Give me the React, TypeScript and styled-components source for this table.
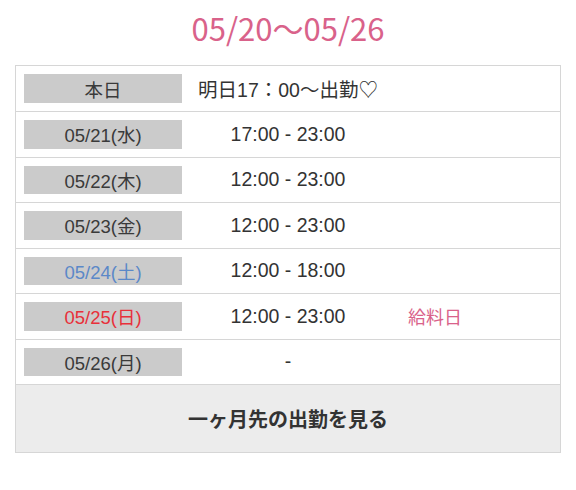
import React from "react";
import styled, { createGlobalStyle } from "styled-components";

const Global = createGlobalStyle`
  html, body { margin: 0; padding: 0; background: #fff; }
  body { font-family: "Noto Sans CJK JP", "Noto Sans", sans-serif; color: #333; }
`;

const Page = styled.div`
  width: 576px;
  padding: 0 15px;
  box-sizing: border-box;
`;

const Title = styled.h2`
  margin: 0;
  height: 55px;
  display: flex;
  align-items: center;
  justify-content: center;
  font-size: 31px;
  font-weight: 400;
  color: #d9628a;
`;

const Table = styled.div`
  margin-top: 10px;
  border: 1px solid #d6d6d6;
  display: flex;
  flex-direction: column;
`;

const Row = styled.div`
  display: grid;
  grid-template-columns: 158px 212px 82px 1fr;
  align-items: center;
  padding: 8px 0 8px 8px;
  border-bottom: 1px solid #d6d6d6;
`;

const Label = styled.div<{ $tone?: "sat" | "sun" }>`
  height: 28.5px;
  background: #cbcbcb;
  display: flex;
  align-items: center;
  justify-content: center;
  font-family: "Liberation Sans", "Noto Sans CJK JP", sans-serif;
  font-size: 18.5px;
  color: ${(p) => (p.$tone === "sat" ? "#5b88c8" : p.$tone === "sun" ? "#e8303a" : "#3a3a3a")};
`;

const Value = styled.div`
  text-align: center;
  font-family: "Liberation Sans", "Noto Sans CJK JP", sans-serif;
  font-size: 19.5px;
  color: #333;
  white-space: nowrap;
`;

const Note = styled.div`
  text-align: center;
  font-size: 18px;
  color: #d9628a;
  white-space: nowrap;
`;

const MoreButton = styled.button`
  height: 67px;
  border: none;
  background: #ececec;
  font-family: inherit;
  font-size: 20px;
  font-weight: 700;
  color: #333;
  cursor: pointer;
`;

type Day = { label: string; value: string; tone?: "sat" | "sun"; note?: string };

const days: Day[] = [
  { label: "本日", value: "明日17：00〜出勤♡" },
  { label: "05/21(水)", value: "17:00 - 23:00" },
  { label: "05/22(木)", value: "12:00 - 23:00" },
  { label: "05/23(金)", value: "12:00 - 23:00" },
  { label: "05/24(土)", value: "12:00 - 18:00", tone: "sat" },
  { label: "05/25(日)", value: "12:00 - 23:00", tone: "sun", note: "給料日" },
  { label: "05/26(月)", value: "-" },
];

export default function App() {
  return (
    <Page>
      <Global />
      <Title>05/20〜05/26</Title>
      <Table>
        {days.map((d) => (
          <Row key={d.label}>
            <Label $tone={d.tone}>{d.label}</Label>
            <Value>{d.value}</Value>
            <Note>{d.note ?? ""}</Note>
          </Row>
        ))}
        <MoreButton>一ヶ月先の出勤を見る</MoreButton>
      </Table>
    </Page>
  );
}
